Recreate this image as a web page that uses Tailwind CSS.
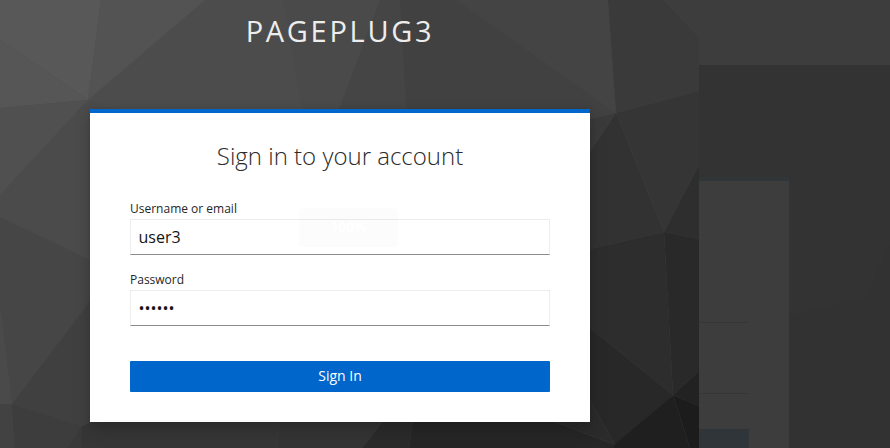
<!DOCTYPE html>
<html lang="en">
<head>
<meta charset="utf-8">
<title>Sign in to PAGEPLUG3</title>
<script src="https://cdn.jsdelivr.net/npm/@tailwindcss/browser@4"></script>
</head>
<body class="relative isolate flex h-[448px] w-[890px] overflow-hidden bg-[#323232] font-['Open_Sans','Noto_Sans',sans-serif]">
  <!-- Low-poly backdrop -->
  <svg class="absolute inset-0 -z-10" width="890" height="448" viewBox="0 0 890 448" aria-hidden="true">
    <rect width="699" height="448" fill="#4c4c4c"/>
    <path d="M0 0H101L88 100L0 40Z" fill="#585858"/>
    <path d="M101 0H205L88 100Z" fill="#535353"/>
    <path d="M0 40L88 100L0 108Z" fill="#565656"/>
    <path d="M0 108L88 100L0 195Z" fill="#505050"/>
    <path d="M88 100L115 109V270L90 260L15 224L0 217V195Z" fill="#4b4b4b"/>
    <path d="M0 217L90 260V301L12 404L0 306Z" fill="#464646"/>
    <path d="M0 306L12 404H0Z" fill="#4a4a4a"/>
    <path d="M100 288V422L82 426L12 404Z" fill="#404040"/>
    <path d="M0 404H12L14 448H0Z" fill="#424242"/>
    <path d="M12 404L82 426L67 448H14Z" fill="#3d3d3d"/>
    <path d="M82 426L67 448H82Z" fill="#393939"/>
    <path d="M82 426L97 420H280L277 448H82Z" fill="#363636"/>
    <path d="M280 420H384L362 448H277Z" fill="#343434"/>
    <path d="M384 420H413L409 448H362Z" fill="#2b2b2b"/>
    <path d="M413 420H550L615 445L614 448H409Z" fill="#262626"/>
    <path d="M283 0H380L338 112H303Z" fill="#4a4a4a"/>
    <path d="M380 0H400L407 112H338Z" fill="#454545"/>
    <path d="M400 0H457L616 113L590 119H407Z" fill="#414141"/>
    <path d="M457 0H608L616 113Z" fill="#444444"/>
    <path d="M608 0H664L699 37V91L616 113Z" fill="#3a3a3a"/>
    <path d="M664 0H699V37Z" fill="#3d3d3d"/>
    <path d="M590 119L616 113L590 152Z" fill="#3a3a3a"/>
    <path d="M616 113L664 232L590 249V152Z" fill="#323232"/>
    <path d="M616 113L699 91V165L664 232Z" fill="#353535"/>
    <path d="M699 165V239L664 232Z" fill="#2e2e2e"/>
    <path d="M590 249L664 232L673 395L590 328Z" fill="#2d2d2d"/>
    <path d="M664 232L699 239V371L673 395Z" fill="#292929"/>
    <path d="M590 328L673 395L615 445L590 400Z" fill="#282828"/>
    <path d="M673 395L699 371V406Z" fill="#222222"/>
    <path d="M673 395L699 406V448H690Z" fill="#1c1c1c"/>
    <path d="M673 395L690 448H614V445Z" fill="#1f1f1f"/>
    <path d="M590 400L615 445L550 420H590Z" fill="#2b2b2b"/>
    <path d="M699 0H890V245L865 298L789 316H699Z" fill="#333333"/>
  </svg>

  <main class="flex w-[699px] shrink-0 flex-col pl-[90px]">
    <header class="h-[109px] w-[500px] pt-[11px] text-center text-[29px] leading-[40px] tracking-[2.7px] text-[#ededed]">PAGEPLUG3</header>
    <section class="relative h-[313px] w-[500px] border-t-4 border-[#0066cc] bg-white px-10 shadow-[0_8px_16px_0_rgba(3,3,3,0.18),0_0_6px_0_rgba(3,3,3,0.1)]">
      <h1 class="pt-[27px] text-center text-2xl leading-[32px] font-light text-[#2b2b2b]">Sign in to your account</h1>
      <form class="flex flex-col">
        <label for="username" class="mt-[28px] h-[19px] text-xs leading-[18px] text-[#262626]">Username or email</label>
        <input id="username" type="text" value="user3" class="h-9 rounded-none border border-[#ededed] border-b-[#8a8d90] bg-white px-[7.5px] text-base text-[#151515]">
        <label for="password" class="mt-4 h-[19px] text-xs leading-[18px] text-[#262626]">Password</label>
        <input id="password" type="password" value="secret" class="h-9 rounded-none border border-[#ededed] border-b-[#8a8d90] bg-white px-[7.5px] text-base text-[#151515]">
        <button type="button" class="mt-[35px] h-[31px] rounded-[1px] bg-[#0066cc] pb-0.5 text-sm leading-[21px] text-white">Sign In</button>
      </form>
      <div class="absolute top-[95px] left-[209px] flex h-[39px] w-[99px] items-center justify-center rounded-[4px] bg-black/[0.01] pb-0.5 text-sm font-bold text-white">100%</div>
    </section>
  </main>

  <!-- Dimmed duplicate of the page edge -->
  <aside class="flex flex-1 flex-col" aria-hidden="true">
    <div class="h-[65px] bg-[#3d3d3d]"></div>
    <div class="mt-[112px] flex h-[271px] w-[90px] flex-col border-t-4 border-[#303538] bg-[#3d3d3d] pr-10">
      <div class="h-[142px] border-b border-[#363636]"></div>
      <div class="h-[71px] border-b border-[#363636]"></div>
      <div class="mt-[35px] flex-1 bg-[#303539]"></div>
    </div>
  </aside>
</body>
</html>
